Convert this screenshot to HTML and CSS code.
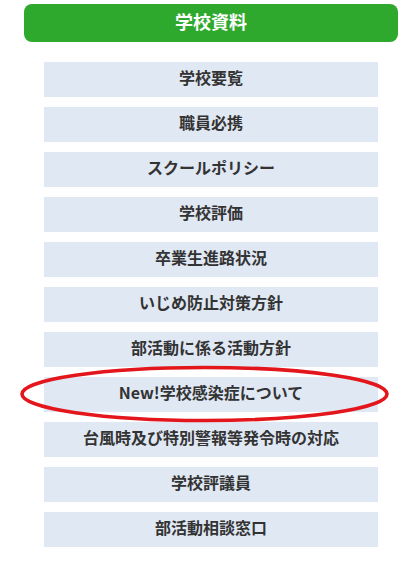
FILE: index.html
```html
<!DOCTYPE html>
<html lang="ja">
<head>
<meta charset="utf-8">
<link rel="stylesheet" href="styles.css">
</head>
<body>
<div class="panel">
  <h2 class="panel-title">学校資料</h2>
  <ul class="doc-list">
    <li class="doc-item">学校要覧</li>
    <li class="doc-item">職員必携</li>
    <li class="doc-item">スクールポリシー</li>
    <li class="doc-item">学校評価</li>
    <li class="doc-item">卒業生進路状況</li>
    <li class="doc-item">いじめ防止対策方針</li>
    <li class="doc-item">部活動に係る活動方針</li>
    <li class="doc-item highlight">New!学校感染症について
      <svg class="circle-mark" width="376" height="64" viewBox="0 0 376 64"><ellipse cx="187.5" cy="32" rx="182.5" ry="26.5" fill="none" stroke="#e3161c" stroke-width="3.6"/></svg>
    </li>
    <li class="doc-item">台風時及び特別警報等発令時の対応</li>
    <li class="doc-item">学校評議員</li>
    <li class="doc-item">部活動相談窓口</li>
  </ul>
</div>
</body>
</html>
```
FILE: styles.css
```css
html, body {
  margin: 0;
  padding: 0;
  background: #ffffff;
}
body {
  font-family: "Noto Sans CJK JP", "Noto Sans", sans-serif;
  color: #333333;
}
.panel {
  padding-top: 4px;
}
.panel-title {
  margin: 0 0 0 24px;
  width: 374px;
  height: 38px;
  background: #2ea92d;
  border-radius: 8px;
  color: #ffffff;
  font-size: 18px;
  font-weight: 700;
  line-height: 34px;
  text-align: center;
}
.doc-list {
  list-style: none;
  margin: 20px 0 0 44px;
  padding: 0;
  width: 334px;
  display: flex;
  flex-direction: column;
  gap: 10px;
}
.doc-item {
  height: 35px;
  background: #e0e8f3;
  font-size: 16px;
  font-weight: 700;
  line-height: 31px;
  text-align: center;
  white-space: nowrap;
}
.highlight {
  position: relative;
}
.circle-mark {
  position: absolute;
  left: -27px;
  top: -15px;
  pointer-events: none;
}
```
